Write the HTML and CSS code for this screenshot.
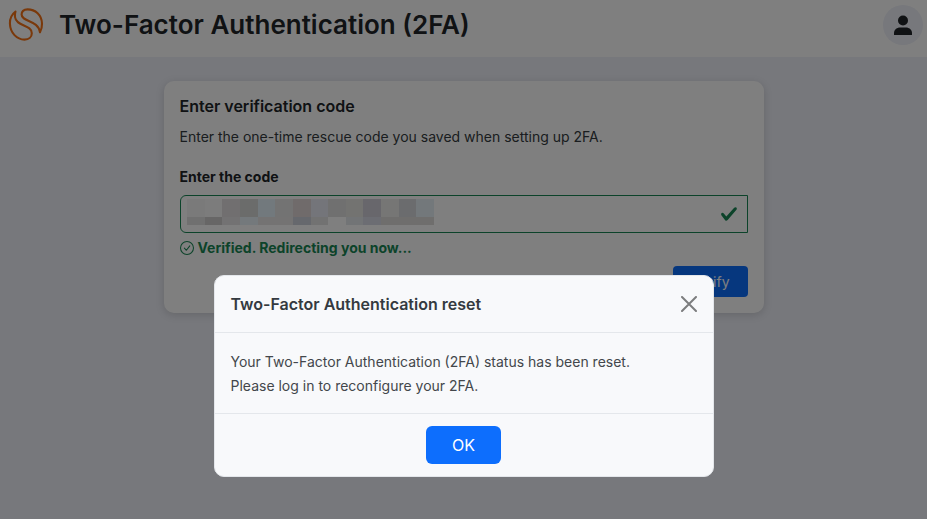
FILE: index.html
```html
<!DOCTYPE html>
<html lang="en">
<head>
  <meta charset="utf-8">
  <meta name="viewport" content="width=device-width, initial-scale=1">
  <title>Two-Factor Authentication (2FA)</title>
  <link rel="stylesheet" href="styles.css">
</head>
<body>
  <header class="topbar">
    <svg class="logo" viewBox="0 0 34 34" fill="none" stroke="#f47216" stroke-width="2.1" stroke-linejoin="round" aria-hidden="true">
      <path d="M6.500 3.500C2.500 6.500.8 11 .9 15.500C1.200 25 8 31.600 15.500 31.600C20 31.600 22.800 28.800 22.800 25.200C22.800 16.500 7 18.500 6 9C5.800 6.500 6 5 6.500 3.500Z"/>
      <path d="M31 24.300C32.500 21.500 33.100 18.500 33 15.500C32.700 7 26.500 1.400 18.500 1.400C14.500 1.400 12.600 3.600 12.600 6.500C12.600 14 29.500 12 31 24.300Z"/>
    </svg>
    <h1 class="page-title">Two-Factor Authentication (2FA)</h1>
    <button class="avatar" type="button" aria-label="Account">
      <svg viewBox="0 0 20 20" width="20" height="20" fill="#212529" aria-hidden="true">
        <circle cx="10" cy="5.500" r="5"/>
        <path d="M1 20v-2c0-3.300 3-5.500 6-5.500h6c3 0 6 2.200 6 5.500v2z"/>
      </svg>
    </button>
  </header>

  <main class="content">
    <form class="card">
      <h2 class="card-title">Enter verification code</h2>
      <p class="card-text">Enter the one-time rescue code you saved when setting up 2FA.</p>
      <label class="label" for="code">Enter the code</label>
      <div class="field">
        <input class="input" id="code" type="text">
        <svg class="mask" viewBox="0 0 247 26" shape-rendering="crispEdges" aria-hidden="true">
          <path fill="#f4f4f4" d="M0 0h18v18H0z"/><path fill="#f8f8f8" d="M18 0h17v18H18z"/>
          <path fill="#e2dee0" d="M35 0h18v18H35z"/><path fill="#d6d9d6" d="M53 0h18v18H53z"/>
          <path fill="#e4f2fa" d="M71 0h17v18H71z"/><path fill="#e6e6e6" d="M88 0h18v18H88z"/>
          <path fill="#e0d6d6" d="M106 0h18v18h-18z"/><path fill="#e8eaf4" d="M124 0h17v18h-17z"/>
          <path fill="#e0e0e0" d="M141 0h18v18h-18z"/><path fill="#e6e6e2" d="M159 0h17v18h-17z"/>
          <path fill="#d0ced8" d="M176 0h18v18h-18z"/><path fill="#ececea" d="M194 0h18v18h-18z"/>
          <path fill="#d6d8dc" d="M212 0h17v18h-17z"/><path fill="#e6f0f6" d="M229 0h18v18h-18z"/>
          <path fill="#e0e0e0" d="M0 18h18v8H0z"/><path fill="#cecccc" d="M18 18h17v8H18z"/>
          <path fill="#e6e4e6" d="M35 18h18v8H35z"/><path fill="#e8f2f8" d="M53 18h18v8H53z"/>
          <path fill="#e8e6e6" d="M71 18h35v8H71z"/><path fill="#ccd0da" d="M106 18h18v8h-18z"/>
          <path fill="#e4e4e4" d="M124 18h17v8h-17z"/><path fill="#fff" d="M141 18h18v8h-18z"/>
          <path fill="#e4e8ec" d="M159 18h17v8h-17z"/><path fill="#d8dae6" d="M176 18h18v8h-18z"/>
          <path fill="#dedcda" d="M194 18h53v8h-53z"/>
        </svg>
        <svg class="tick" viewBox="0 0 8 8" fill="#198754" aria-hidden="true">
          <path d="M2.300 6.730.6 4.530c-.4-1.040.46-1.400 1.100-.8l1.100 1.400 3.400-3.800c.6-.63 1.600-.27 1.200.7l-4 4.600c-.43.5-.8.4-1.100.1z"/>
        </svg>
      </div>
      <p class="feedback">
        <svg viewBox="0 0 16 16" width="14" height="14" fill="none" stroke="#198754" stroke-width="1.200" stroke-linecap="round" stroke-linejoin="round" aria-hidden="true">
          <circle cx="8" cy="8" r="7.400"/>
          <path d="M5 8.200l2.300 2.400 3.900-5"/>
        </svg>
        Verified. Redirecting you now...
      </p>
      <button class="btn btn-sm" type="submit">Verify</button>
    </form>
  </main>

  <div class="backdrop">
    <section class="modal" role="dialog" aria-modal="true" aria-labelledby="modal-title">
      <div class="modal-header">
        <h2 class="modal-title" id="modal-title">Two-Factor Authentication reset</h2>
        <button class="close" type="button" aria-label="Close">
          <svg viewBox="0 0 16 16" width="16" height="16" fill="none" stroke="#7c7d7e" stroke-width="2" stroke-linecap="round" aria-hidden="true">
            <path d="M1 1l14 14M15 1L1 15"/>
          </svg>
        </button>
      </div>
      <div class="modal-body">
        <p>Your Two-Factor Authentication (2FA) status has been reset.<br>Please log in to reconfigure your 2FA.</p>
      </div>
      <div class="modal-footer">
        <button class="btn" type="button">OK</button>
      </div>
    </section>
  </div>
</body>
</html>
```
FILE: styles.css
```css
* {
  box-sizing: border-box;
}

body {
  margin: 0;
  min-height: 100vh;
  background: #eef0f8;
  color: #343a40;
  font-family: Inter, "Liberation Sans", sans-serif;
  font-size: 14px;
  line-height: 20px;
}

h1, h2, p {
  margin: 0;
}

button, input {
  font-family: inherit;
}

.topbar {
  display: flex;
  align-items: center;
  gap: 16px;
  padding: 5px 4px 12px 9px;
  background: #fff;
}

.logo {
  width: 34px;
  height: 34px;
  overflow: visible;
}

.page-title {
  flex: 1;
  font-size: 26px;
  font-weight: 600;
  line-height: 32px;
}

.avatar {
  display: flex;
  align-items: center;
  justify-content: center;
  width: 40px;
  height: 40px;
  padding: 0;
  border: 0;
  border-radius: 50%;
  background: #eef0f8;
}

.content {
  padding: 24px 16px;
}

.card {
  display: flex;
  flex-direction: column;
  max-width: 600px;
  margin: 0 auto;
  padding: 16px;
  border-radius: 10px;
  background: #fff;
  box-shadow: 0 2px 8px rgba(0, 0, 0, 0.15);
}

.card-title {
  margin-bottom: 12px;
  font-size: 16px;
  font-weight: 600;
  line-height: 18px;
}

.card-text {
  margin-bottom: 20px;
}

.label {
  margin-bottom: 8px;
  font-weight: 700;
}

.field {
  position: relative;
}

.input {
  display: block;
  width: 100%;
  height: 38px;
  padding: 6px 36px 6px 12px;
  border: 1px solid #198754;
  border-radius: 6px 0 0 6px;
  background: #fff;
  font-size: 14px;
}

.mask {
  position: absolute;
  top: 4px;
  left: 7px;
  width: 247px;
  height: 26px;
}

.tick {
  position: absolute;
  top: 10px;
  right: 10px;
  width: 18px;
  height: 18px;
}

.feedback {
  display: flex;
  align-items: center;
  gap: 4px;
  margin: 5px 0 8px;
  color: #198754;
  font-weight: 700;
}

.btn {
  min-width: 75px;
  height: 38px;
  padding: 0 12px;
  border: 0;
  border-radius: 6px;
  background: #0d6efd;
  color: #fff;
  font-size: 16px;
}

.btn-sm {
  align-self: flex-end;
  height: 31px;
  border-radius: 4px;
  font-size: 14px;
}

.backdrop {
  position: fixed;
  inset: 0;
  display: flex;
  align-items: flex-end;
  justify-content: center;
  padding: 16px 16px 42px;
  background: rgba(0, 0, 0, 0.5);
}

.page-title,
.card-title,
.label {
  color: #212529;
}

.modal {
  flex: 0 1 500px;
  border: 1px solid #e4e7eb;
  border-radius: 10px;
  background: #f8f9fb;
}

.modal-header {
  display: flex;
  align-items: center;
  justify-content: space-between;
  padding: 16px;
  border-bottom: 1px solid #e4e7eb;
}

.modal-title {
  font-size: 16px;
  font-weight: 600;
  line-height: 24px;
}

.close {
  display: flex;
  padding: 0;
  border: 0;
  background: none;
}

.modal-body {
  padding: 17px 16px 15px;
  color: #43474b;
  line-height: 24px;
}

.modal-footer {
  display: flex;
  justify-content: center;
  padding: 12px;
  border-top: 1px solid #e4e7eb;
}
```
